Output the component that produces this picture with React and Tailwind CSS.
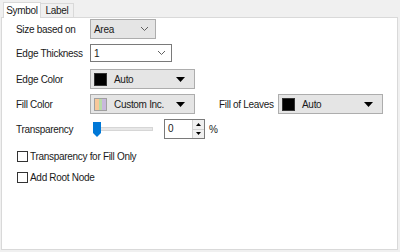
import React from "react";

const Chevron = () => (
  <svg width="9" height="6" viewBox="0 0 9 6" className="shrink-0">
    <path d="M1 1 L4.5 4.5 L8 1" fill="none" stroke="#606060" strokeWidth="1" />
  </svg>
);

const Tri = () => (
  <svg width="9" height="5" viewBox="0 0 9 5" className="shrink-0">
    <path d="M0 0 L9 0 L4.5 5 Z" fill="#000" />
  </svg>
);

const ColorDrop = ({ swatch, label }) => (
  <div className="w-[105px] h-[20px] shrink-0 flex items-center bg-[#e5e5e5] border border-[#adadad] pl-[3px] pr-[9px]">
    {swatch}
    <span className="ml-[7px] flex-1 whitespace-nowrap">{label}</span>
    <Tri />
  </div>
);

const Black = () => <div className="w-[13px] h-[13px] shrink-0 bg-black border border-[#333]" />;
const Multi = () => (
  <div className="w-[13px] h-[13px] shrink-0 flex border border-[#a0a0a0]">
    <div className="flex-1 bg-[#f8c89a]" />
    <div className="flex-1 bg-[#b8dca8]" />
    <div className="flex-1 bg-[#c8b8dc]" />
  </div>
);

const Check = ({ label }) => (
  <div className="flex items-center h-[11px]">
    <div className="w-[11px] h-[11px] shrink-0 border border-[#333] bg-white" />
    <span className="ml-[2px] whitespace-nowrap">{label}</span>
  </div>
);

export default function App() {
  return (
    <div
      className="w-[400px] h-[252px] bg-[#f0f0f0] text-[10px] tracking-[-0.3px] text-[#1a1a1a] relative"
      style={{ fontFamily: '"Liberation Sans", Arial, sans-serif' }}
    >
      <div className="flex items-end h-[17px] pl-[3px] pt-[1px]">
        <div className="w-[38px] h-[16px] bg-white border border-b-0 border-[#d9d9d9] flex items-center justify-center relative z-10 -mb-px">
          Symbol
        </div>
        <div className="w-[33px] h-[14px] bg-[#f0f0f0] border border-b-0 border-l-0 border-[#d9d9d9] flex items-center justify-center">
          Label
        </div>
      </div>
      <div className="ml-[1px] w-[397px] h-[233px] bg-white border border-[#d9d9d9] pl-[14px] pt-[1px] flex flex-col">
        <div className="flex items-center h-[20px]">
          <span className="w-[74px] shrink-0 whitespace-nowrap">Size based on</span>
          <div className="w-[66px] h-[20px] bg-[#e5e5e5] border border-[#adadad] flex items-center pl-[3px] pr-[6px] justify-between">
            <span>Area</span>
            <Chevron />
          </div>
        </div>
        <div className="flex items-center h-[18px] mt-[5px]">
          <span className="w-[74px] shrink-0 whitespace-nowrap">Edge Thickness</span>
          <div className="w-[82px] h-[18px] bg-white border border-[#7a7a7a] flex items-center pl-[3px] pr-[5px] justify-between">
            <span>1</span>
            <Chevron />
          </div>
        </div>
        <div className="flex items-center h-[20px] mt-[7px]">
          <span className="w-[74px] shrink-0 whitespace-nowrap">Edge Color</span>
          <ColorDrop swatch={<Black />} label="Auto" />
        </div>
        <div className="flex items-center h-[20px] mt-[5px]">
          <span className="w-[74px] shrink-0 whitespace-nowrap">Fill Color</span>
          <ColorDrop swatch={<Multi />} label="Custom Inc." />
          <span className="ml-[24px] w-[59px] shrink-0 whitespace-nowrap">Fill of Leaves</span>
          <ColorDrop swatch={<Black />} label="Auto" />
        </div>
        <div className="flex items-center h-[20px] mt-[5px]">
          <span className="w-[77px] shrink-0 whitespace-nowrap">Transparency</span>
          <div className="relative w-[60px] h-[15px] flex items-center">
            <div className="w-full h-[4px] bg-[#e7e7e7] border border-[#d6d6d6]" />
            <svg width="8" height="15" viewBox="0 0 8 15" className="absolute left-0 top-0">
              <path d="M0 0 H8 V11 L4 15 L0 11 Z" fill="#0078d7" />
            </svg>
          </div>
          <div className="ml-[11px] w-[41px] h-[20px] border border-[#7a7a7a] bg-white flex">
            <span className="flex-1 pl-[3px] leading-[18px]">0</span>
            <div className="w-[12px] flex flex-col border-l border-[#d0d0d0]">
              <div className="flex-1 bg-[#f0f0f0] border-b border-[#d0d0d0] flex items-center justify-center">
                <svg width="5" height="3" viewBox="0 0 5 3"><path d="M0 3 L2.5 0 L5 3 Z" fill="#000" /></svg>
              </div>
              <div className="flex-1 bg-[#f0f0f0] flex items-center justify-center">
                <svg width="5" height="3" viewBox="0 0 5 3"><path d="M0 0 L5 0 L2.5 3 Z" fill="#000" /></svg>
              </div>
            </div>
          </div>
          <span className="ml-[4px]">%</span>
        </div>
        <div className="mt-[12px] pl-[1px]">
          <Check label="Transparency for Fill Only" />
        </div>
        <div className="mt-[10px] pl-[1px]">
          <Check label="Add Root Node" />
        </div>
      </div>
    </div>
  );
}
